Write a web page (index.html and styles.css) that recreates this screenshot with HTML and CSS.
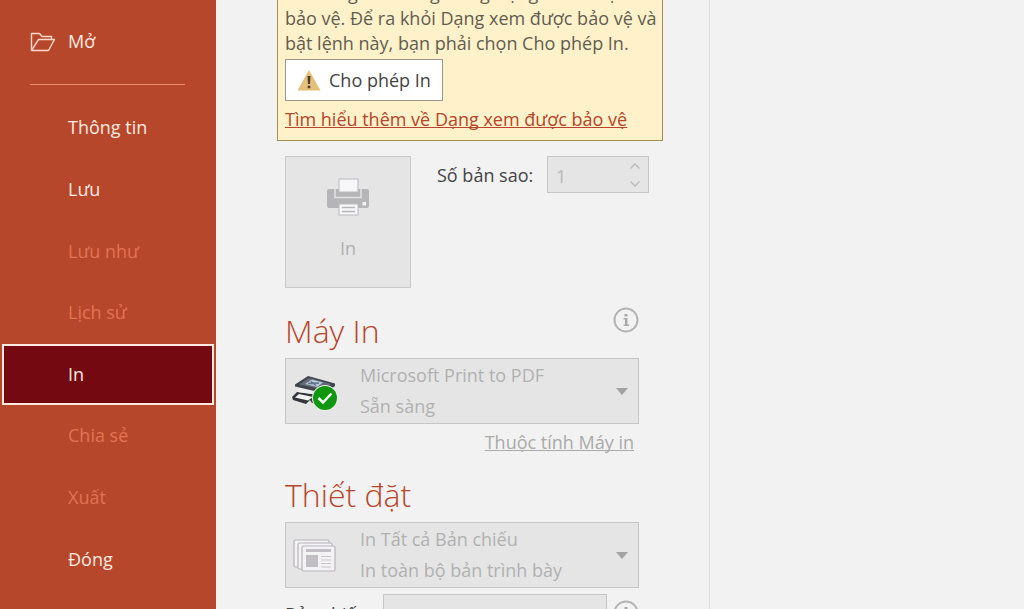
FILE: index.html
```html
<!DOCTYPE html>
<html lang="vi">
<head>
<meta charset="utf-8">
<meta name="viewport" content="width=device-width, initial-scale=1">
<title>In</title>
<link rel="stylesheet" href="styles.css">
</head>
<body>
<div class="backstage">
  <aside class="sidebar">
    <a class="open-link" href="#open">
      <svg class="folder-icon" width="26" height="20" viewBox="0 0 26 20" aria-hidden="true"><path d="M1.500 18.500V1.500H9.500L12 4.500H21.500V7.500M1.500 18.500H18.500L24.500 7.500H8.500L1.500 18.500Z" fill="none" stroke="#ffd9c9" stroke-width="1.400" stroke-linejoin="round"/></svg>
      <span>Mở</span>
    </a>
    <hr class="divider">
    <nav class="menu">
      <a class="menu-item" href="#info">Thông tin</a>
      <a class="menu-item" href="#save">Lưu</a>
      <a class="menu-item disabled" href="#save-as" aria-disabled="true">Lưu như</a>
      <a class="menu-item disabled" href="#history" aria-disabled="true">Lịch sử</a>
      <a class="menu-item selected" href="#print" aria-current="page">In</a>
      <a class="menu-item disabled" href="#share" aria-disabled="true">Chia sẻ</a>
      <a class="menu-item disabled" href="#export" aria-disabled="true">Xuất</a>
      <a class="menu-item" href="#close">Đóng</a>
    </nav>
  </aside>

  <main class="settings">
    <section class="notice">
      <p class="notice-text">In không sẵn dùng trong Dạng xem được<br>bảo vệ. Để ra khỏi Dạng xem được bảo vệ và<br>bật lệnh này, bạn phải chọn Cho phép In.</p>
      <button class="enable-button" type="button">
        <svg width="24" height="22" viewBox="0 0 24 22" aria-hidden="true"><path d="M12 1L23.500 21.500H.5Z" fill="#e5c07b"/><path d="M10.500 7h3l-.5 8h-2zM10.700 16.700h2.600v2.600h-2.600z" fill="#4d3b2c"/></svg>
        <span>Cho phép In</span>
      </button>
      <a class="learn-link" href="#protected-view">Tìm hiểu thêm về Dạng xem được bảo vệ</a>
    </section>

    <div class="print-row">
      <button class="print-button" type="button" disabled>
        <svg width="42" height="38" viewBox="0 0 42 38" aria-hidden="true">
          <path d="M2 11H40Q42 11 42 13V28Q42 30 40 30H2Q0 30 0 28V13Q0 11 2 11Z" fill="#b5b4b6"/>
          <path d="M8 11V19.500H34V11" fill="none" stroke="#e2e2e2" stroke-width="1.500"/>
          <rect x="12" y="1" width="19" height="13" fill="#f7f7f9" stroke="#bbb9bd"/>
          <rect x="12" y="26" width="19" height="11" fill="#f7f7f9" stroke="#bbb9bd"/>
          <path d="M15 29.500H28M15 33.500H28" stroke="#b5b4b6" stroke-width="1.500"/>
          <rect x="35.500" y="24" width="3.500" height="3.500" fill="#f2f2f2"/>
        </svg>
        <span>In</span>
      </button>
      <label class="copies-label" for="copies">Số bản sao:</label>
      <div class="spinner">
        <input class="copies-input" id="copies" type="text" inputmode="numeric" value="1" disabled>
        <svg class="spinner-arrows" width="12" height="26" viewBox="0 0 12 26" aria-hidden="true"><path d="M1.500 6.500L6 2L10.500 6.500M1.500 19.500L6 24L10.500 19.500" fill="none" stroke="#bdbdbd" stroke-width="1.500"/></svg>
      </div>
    </div>

    <section class="group">
      <div class="group-head">
        <h2 class="group-title">Máy In</h2>
        <svg class="info-icon" width="26" height="26" viewBox="0 0 26 26" role="img" aria-label="Thông tin máy in"><circle cx="13" cy="13" r="11.500" fill="none" stroke="#b4b4b4" stroke-width="2"/><path d="M11.500 7h3v2.600h-3zM10.500 11h4v6.500h1.500v1.500h-5.500v-1.500h1.500v-5h-1.500z" fill="#aaa"/></svg>
      </div>
      <button class="picker" type="button" aria-haspopup="listbox" disabled>
        <svg class="picker-icon" width="48" height="40" viewBox="0 0 48 40" aria-hidden="true">
          <path d="M1 26L6 21L28 24V33L21 32L19 29L15 33L2 29Z" fill="#33363b"/>
          <path d="M7 21L35 25L43 16V12L8 16Z" fill="#eeeff1"/>
          <path d="M4 13.500L17 5L44 12.500V15L34 22.500L4 15.500Z" fill="#40454d"/>
          <path d="M8 13.500L18 7L40 13L33 18.500Z" fill="#666c75"/>
          <path d="M14 13L21 8.500L32 11.500L26 16Z" fill="#b5c8db"/>
          <path d="M20 10.500L25 14.500M17 12.500L28 12" stroke="#5f7388" stroke-width="1.500"/>
          <path d="M4 26.500L8 23L22 26L17 29.500Z" fill="#f3f3f3"/>
          <circle cx="34" cy="27" r="13" fill="#e8f1e6"/>
          <circle cx="34" cy="27" r="12" fill="#109610"/>
          <path d="M27.500 27L32 31.500L40.500 22.500" fill="none" stroke="#f2fff0" stroke-width="2.500"/>
        </svg>
        <span class="picker-text"><span>Microsoft Print to PDF</span><span>Sẵn sàng</span></span>
        <svg class="caret" width="12" height="7" viewBox="0 0 12 7" aria-hidden="true"><path d="M0 0H12L6 7Z" fill="#a3a3a3"/></svg>
      </button>
      <a class="properties-link" href="#printer-properties" aria-disabled="true">Thuộc tính Máy in</a>
    </section>

    <section class="group">
      <div class="group-head">
        <h2 class="group-title">Thiết đặt</h2>
      </div>
      <button class="picker" type="button" aria-haspopup="listbox" disabled>
        <svg class="picker-icon" width="48" height="40" viewBox="0 0 48 40" aria-hidden="true">
          <g fill="#f3f2f4" stroke="#bab4bb" stroke-width="1.200">
            <rect x="3" y="5" width="35" height="27" rx="1.500"/>
            <rect x="7" y="8" width="34" height="26" rx="1.500"/>
            <rect x="11" y="11" width="33" height="25" rx="1.500"/>
          </g>
          <path d="M15 14H40V17H15ZM15 20H27V32H15Z" fill="#c2bec4"/>
          <path d="M30 21.500H40M30 25H40M30 28.500H40M30 32H40" stroke="#ccc7ce" stroke-width="1.200"/>
        </svg>
        <span class="picker-text"><span>In Tất cả Bản chiếu</span><span>In toàn bộ bản trình bày</span></span>
        <svg class="caret" width="12" height="7" viewBox="0 0 12 7" aria-hidden="true"><path d="M0 0H12L6 7Z" fill="#a3a3a3"/></svg>
      </button>
      <div class="slides-row">
        <label class="slides-label" for="slides">Bản chiếu:</label>
        <input class="slides-input" id="slides" type="text" disabled>
        <svg class="info-icon" width="26" height="26" viewBox="0 0 26 26" role="img" aria-label="Thông tin bản chiếu"><circle cx="13" cy="13" r="11.500" fill="none" stroke="#b4b4b4" stroke-width="2"/><path d="M11.500 7h3v2.600h-3zM10.500 11h4v6.500h1.500v1.500h-5.500v-1.500h1.500v-5h-1.500z" fill="#aaa"/></svg>
      </div>
    </section>
  </main>

  <section class="preview" aria-label="Xem trước"></section>
</div>
</body>
</html>
```
FILE: styles.css
```css
* {
  box-sizing: border-box;
}

body {
  margin: 0;
  font-family: "Open Sans", "Noto Sans", sans-serif;
  font-size: 18px;
  line-height: 25px;
  color: #444;
  background: #f2f2f2;
}

button,
input {
  font: inherit;
  color: inherit;
  margin: 0;
  border-radius: 0;
}

.backstage {
  display: grid;
  grid-template-columns: 216px 494px 1fr;
  grid-template-rows: minmax(0, 1fr);
  height: 100vh;
  overflow: hidden;
}

.sidebar {
  display: flex;
  flex-direction: column;
  padding: 24px 0 19px;
  background: #b7472a;
}

.open-link {
  display: flex;
  align-items: center;
  gap: 12px;
  padding: 5px 30px;
  color: #ffeae0;
  text-decoration: none;
}

.divider {
  width: 155px;
  margin: 25px 30px 12px;
  border: 0;
  border-top: 1px solid #ec8b6c;
}

.menu {
  flex: 1;
  display: grid;
  grid-auto-rows: 1fr;
}

.menu-item {
  display: flex;
  align-items: center;
  margin: 0 2px;
  padding-left: 66px;
  white-space: nowrap;
  color: #ffeae0;
  text-decoration: none;
}

.menu-item.disabled {
  color: #e07355;
}

.menu-item.selected {
  padding-left: 64px;
  border: 2px solid #ffe9de;
  background: #740912;
}

.settings {
  padding: 0 46px 0 61px;
  border-right: 1px solid #dcdcdc;
}

.notice {
  display: flex;
  flex-direction: column;
  align-items: flex-start;
  margin-top: -28px;
  padding: 8px 7px;
  border: 1px solid #a48d4e;
  background: #fff2ca;
}

.notice-text {
  margin: 0 0 3px;
  white-space: nowrap;
  color: #625d50;
}

.enable-button {
  display: flex;
  align-items: center;
  gap: 8px;
  height: 42px;
  margin-bottom: 6px;
  padding: 0 11px;
  border: 1px solid #999485;
  background: #fff;
}

.learn-link {
  color: #b5452c;
  white-space: nowrap;
  text-decoration-skip-ink: none;
}

.print-row {
  display: flex;
  align-items: flex-start;
  margin: 15px 14px 0 8px;
}

.print-button {
  display: flex;
  flex-direction: column;
  align-items: center;
  gap: 20px;
  width: 126px;
  height: 132px;
  padding: 21px 0 0;
  border: 1px solid #c9c9c9;
  background: #e5e5e5;
  color: #b1b1b1;
}

.copies-label {
  flex: 1;
  padding: 7px 0 0 26px;
  white-space: nowrap;
}

.spinner {
  display: flex;
  align-items: center;
  width: 102px;
  height: 37px;
  padding-right: 7px;
  border: 1px solid #c6c6c6;
  background: #e5e5e5;
}

.copies-input {
  flex: 1;
  min-width: 0;
  padding: 3px 8px 0;
  border: 0;
  background: transparent;
  color: #b9b9b9;
}

.group {
  display: flex;
  flex-direction: column;
  margin: 19px 24px 0 8px;
}

.group + .group {
  margin-top: 16px;
}

.group-head {
  display: flex;
  justify-content: space-between;
  margin-bottom: 7px;
}

.group-title {
  margin: 0;
  padding-top: 4px;
  font-size: 32px;
  font-weight: 300;
  line-height: 40px;
  color: #b7472a;
}

.picker {
  display: flex;
  align-items: center;
  height: 66px;
  padding: 0 10px 0 5px;
  border: 1px solid #c6c6c6;
  background: #e5e5e5;
  color: #b1b1b1;
  text-align: left;
}

.picker-text {
  display: flex;
  flex: 1;
  flex-direction: column;
  gap: 6px;
  padding: 0 0 1px 21px;
  white-space: nowrap;
}

.properties-link {
  align-self: flex-end;
  margin: 6px 5px 0 0;
  color: #aaa;
  text-decoration-skip-ink: none;
}

.slides-row {
  display: flex;
  align-items: center;
  gap: 6px;
  margin-top: 6px;
}

.slides-label {
  width: 92px;
  padding-top: 3px;
  white-space: nowrap;
}

.slides-input {
  flex: 1;
  min-width: 0;
  height: 37px;
  border: 1px solid #c6c6c6;
  background: #e5e5e5;
}
```
